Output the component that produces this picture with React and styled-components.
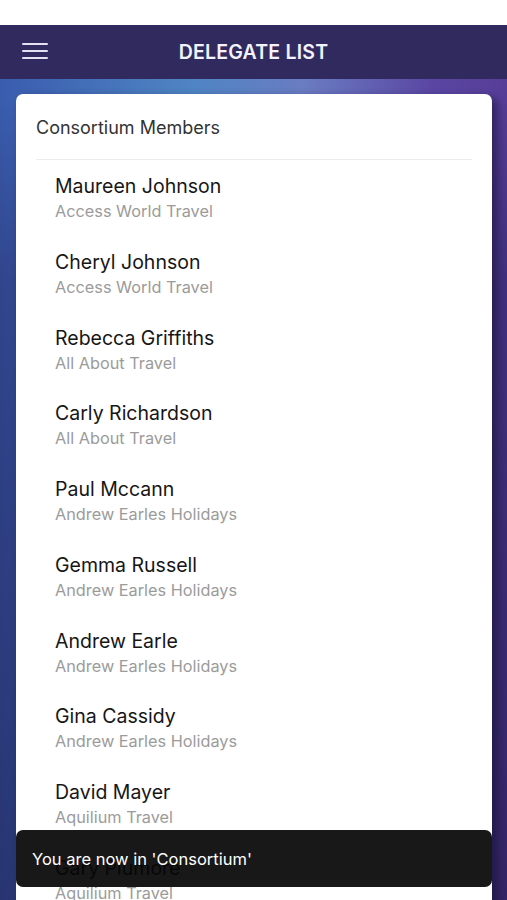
import React from "react";
import styled, { createGlobalStyle } from "styled-components";

const members = [
  { name: "Maureen Johnson", company: "Access World Travel" },
  { name: "Cheryl Johnson", company: "Access World Travel" },
  { name: "Rebecca Griffiths", company: "All About Travel" },
  { name: "Carly Richardson", company: "All About Travel" },
  { name: "Paul Mccann", company: "Andrew Earles Holidays" },
  { name: "Gemma Russell", company: "Andrew Earles Holidays" },
  { name: "Andrew Earle", company: "Andrew Earles Holidays" },
  { name: "Gina Cassidy", company: "Andrew Earles Holidays" },
  { name: "David Mayer", company: "Aquilium Travel" },
  { name: "Gary Plumore", company: "Aquilium Travel" },
];

const GlobalStyle = createGlobalStyle`
  html, body {
    margin: 0;
    padding: 0;
    height: 900px;
    overflow: hidden;
  }
  body {
    font-family: Inter, "Liberation Sans", sans-serif;
    background: #ffffff;
  }
`;

const Screen = styled.div`
  width: 507px;
  height: 900px;
  display: flex;
  flex-direction: column;
  overflow: hidden;
  position: relative;
`;

const StatusBar = styled.div`
  height: 25px;
  background: #ffffff;
  flex: none;
`;

const Header = styled.header`
  height: 54px;
  flex: none;
  background: #312a5f;
  display: flex;
  align-items: center;
  justify-content: center;
  position: relative;
`;

const MenuButton = styled.button`
  position: absolute;
  left: 22px;
  top: 18px;
  width: 26px;
  height: 16px;
  padding: 0;
  border: 0;
  background: none;
  display: flex;
  flex-direction: column;
  justify-content: space-between;
  span {
    display: block;
    height: 2px;
    border-radius: 1px;
    background: #e4e0f2;
  }
`;

const Title = styled.h1`
  margin: 0;
  color: #f4f2fb;
  font-size: 19.5px;
  font-weight: 600;
  letter-spacing: 0.2px;
`;

const Body = styled.main`
  flex: 1;
  padding: 15px 15px 0 16px;
  background:
    linear-gradient(to bottom, rgba(20, 18, 60, 0) 0px, rgba(20, 18, 60, 0) 20px, rgba(30, 26, 80, 0.35) 200px, rgba(24, 20, 64, 0.55) 820px),
    linear-gradient(to right, #3a5cae 0%, #4f85c4 38%, #6a7cc2 60%, #5a47a3 85%, #573d98 100%);
  overflow: hidden;
`;

const Card = styled.section`
  background: #ffffff;
  border-radius: 7px;
  box-shadow: 6px 4px 10px rgba(20, 14, 50, 0.55);
  padding: 0 20px;
  height: 900px;
`;

const CardTitle = styled.div`
  height: 66px;
  display: flex;
  align-items: center;
  color: #333333;
  font-size: 18px;
  border-bottom: 1px solid #ececec;
  padding-top: 1px;
  box-sizing: border-box;
`;

const List = styled.ul`
  list-style: none;
  margin: 0;
  padding: 0;
`;

const Item = styled.li`
  height: 75.75px;
  box-sizing: border-box;
  padding: 14px 0 0 19px;
`;

const Name = styled.div`
  font-size: 19.5px;
  line-height: 24px;
  color: #161616;
`;

const Company = styled.div`
  margin-top: 3px;
  font-size: 16.3px;
  line-height: 20px;
  color: #9b9b9b;
`;

const Toast = styled.div`
  position: absolute;
  left: 16px;
  right: 15px;
  bottom: 13px;
  height: 57px;
  border-radius: 7px;
  background: rgba(6, 6, 6, 0.93);
  display: flex;
  align-items: center;
  padding-left: 16px;
  color: #ffffff;
  font-size: 16.5px;
`;

export default function App() {
  return (
    <Screen>
      <GlobalStyle />
      <StatusBar />
      <Header>
        <MenuButton aria-label="menu">
          <span />
          <span />
          <span />
        </MenuButton>
        <Title>DELEGATE LIST</Title>
      </Header>
      <Body>
        <Card>
          <CardTitle>Consortium Members</CardTitle>
          <List>
            {members.map((m) => (
              <Item key={m.name}>
                <Name>{m.name}</Name>
                <Company>{m.company}</Company>
              </Item>
            ))}
          </List>
        </Card>
      </Body>
      <Toast>You are now in 'Consortium'</Toast>
    </Screen>
  );
}
